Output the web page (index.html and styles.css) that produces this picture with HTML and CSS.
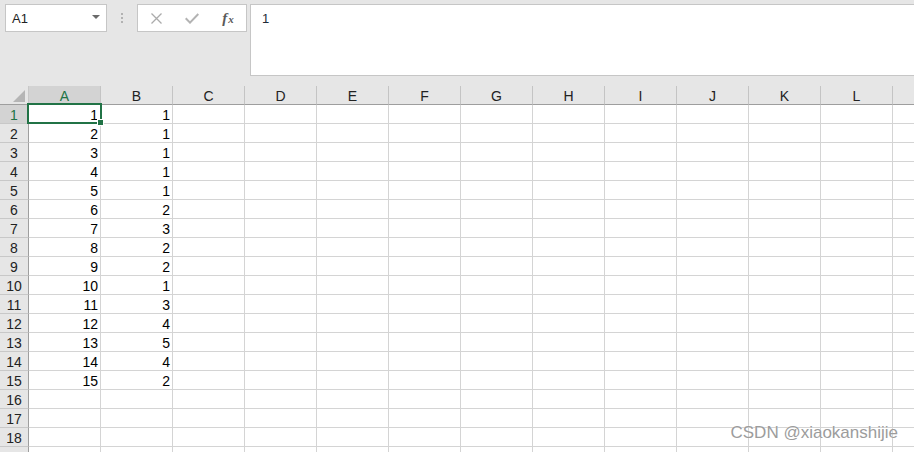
FILE: index.html
```html
<!DOCTYPE html>
<html>
<head>
<meta charset="utf-8">
<link rel="stylesheet" href="styles.css">
</head>
<body>
<div class="top">
  <div class="namebox"><span>A1</span><svg class="dd" width="8" height="4" viewBox="0 0 8 4"><path d="M0 0H8L4 4Z" fill="#6a6a6a"/></svg></div>
  <div class="sep"><i></i><i></i><i></i></div>
  <div class="fbox">
    <span class="slot"><svg width="11" height="11" viewBox="0 0 11 11"><path d="M0.5 0.5L10.5 10.5M10.5 0.5L0.5 10.5" stroke="#ababab" stroke-width="1.3" fill="none"/></svg></span>
    <span class="slot"><svg width="14" height="11" viewBox="0 0 14 11"><path d="M0.7 5.2L5 9.6L13.3 1" stroke="#b3b3b3" stroke-width="2" fill="none"/></svg></span>
    <span class="slot"><span class="fx"><span class="f">f</span><span class="x">x</span></span></span>
  </div>
  <div class="finput">1</div>
</div>
<div class="sheet">
  <div class="hrow">
    <div class="corner"><svg width="12" height="12" viewBox="0 0 12 12"><path d="M12 0V12H0Z" fill="#b5b5b5"/></svg></div>
    <div class="ch sel">A</div><div class="ch">B</div><div class="ch">C</div><div class="ch">D</div><div class="ch">E</div><div class="ch">F</div><div class="ch">G</div><div class="ch">H</div><div class="ch">I</div><div class="ch">J</div><div class="ch">K</div><div class="ch">L</div><div class="ch last"></div>
  </div>
  <div class="row"><div class="rh sel">1</div><div class="cells"><div class="c active">1<div class="selbox"><div class="handle"></div></div></div><div class="c">1</div></div></div>
  <div class="row"><div class="rh">2</div><div class="cells"><div class="c">2</div><div class="c">1</div></div></div>
  <div class="row"><div class="rh">3</div><div class="cells"><div class="c">3</div><div class="c">1</div></div></div>
  <div class="row"><div class="rh">4</div><div class="cells"><div class="c">4</div><div class="c">1</div></div></div>
  <div class="row"><div class="rh">5</div><div class="cells"><div class="c">5</div><div class="c">1</div></div></div>
  <div class="row"><div class="rh">6</div><div class="cells"><div class="c">6</div><div class="c">2</div></div></div>
  <div class="row"><div class="rh">7</div><div class="cells"><div class="c">7</div><div class="c">3</div></div></div>
  <div class="row"><div class="rh">8</div><div class="cells"><div class="c">8</div><div class="c">2</div></div></div>
  <div class="row"><div class="rh">9</div><div class="cells"><div class="c">9</div><div class="c">2</div></div></div>
  <div class="row"><div class="rh">10</div><div class="cells"><div class="c">10</div><div class="c">1</div></div></div>
  <div class="row"><div class="rh">11</div><div class="cells"><div class="c">11</div><div class="c">3</div></div></div>
  <div class="row"><div class="rh">12</div><div class="cells"><div class="c">12</div><div class="c">4</div></div></div>
  <div class="row"><div class="rh">13</div><div class="cells"><div class="c">13</div><div class="c">5</div></div></div>
  <div class="row"><div class="rh">14</div><div class="cells"><div class="c">14</div><div class="c">4</div></div></div>
  <div class="row"><div class="rh">15</div><div class="cells"><div class="c">15</div><div class="c">2</div></div></div>
  <div class="row"><div class="rh">16</div><div class="cells"></div></div>
  <div class="row"><div class="rh">17</div><div class="cells"></div></div>
  <div class="row"><div class="rh">18</div><div class="cells"></div></div>
  <div class="row"><div class="rh"></div><div class="cells"></div></div>
</div>
<div class="watermark">CSDN @xiaokanshijie</div>
</body>
</html>
```
FILE: styles.css
```css
html, body {
  margin: 0;
  padding: 0;
}
body {
  width: 914px;
  height: 452px;
  overflow: hidden;
  background: #ffffff;
  font-family: "Liberation Sans", Arial, sans-serif;
  color: #000;
  position: relative;
}
.top {
  height: 86px;
  box-sizing: border-box;
  background: #e6e6e6;
  display: flex;
  align-items: flex-start;
  padding: 4px 0 0 5px;
  overflow: hidden;
}
.namebox {
  width: 102px;
  height: 28px;
  box-sizing: border-box;
  border: 1px solid #c6c6c6;
  background: #fff;
  display: flex;
  align-items: center;
  justify-content: space-between;
  padding: 0 6px 0 6px;
  font-size: 13px;
  color: #222;
  flex: none;
}
.namebox .dd {
  margin-top: -2px;
}
.sep {
  margin-left: 14px;
  width: 2px;
  padding-top: 9px;
  display: flex;
  flex-direction: column;
  gap: 2px;
  flex: none;
}
.sep i {
  display: block;
  width: 2px;
  height: 2px;
  background: #b2b2b2;
}
.fbox {
  margin-left: 14px;
  width: 110px;
  height: 28px;
  box-sizing: border-box;
  border: 1px solid #c6c6c6;
  background: #fff;
  display: flex;
  align-items: center;
  flex: none;
}
.slot {
  width: 36px;
  height: 26px;
  display: flex;
  align-items: center;
  justify-content: center;
}
.fx {
  font-family: "Liberation Serif", "Times New Roman", serif;
  font-style: italic;
  font-weight: bold;
  color: #5a5a5a;
  line-height: 14px;
  white-space: nowrap;
}
.fx .f {
  font-size: 15px;
}
.fx .x {
  font-size: 11px;
  margin-left: 1px;
}
.finput {
  margin-left: 3px;
  flex: 1;
  height: 72px;
  box-sizing: border-box;
  border: 1px solid #c6c6c6;
  border-right: none;
  background: #fff;
  padding: 6px 0 0 11px;
  font-size: 13px;
  line-height: 16px;
  color: #1e2a38;
}
.sheet {
  display: flex;
  flex-direction: column;
}
.hrow {
  display: flex;
  height: 19px;
}
.corner {
  width: 29px;
  flex: none;
  box-sizing: border-box;
  background: #e6e6e6;
  border-right: 1px solid #c8c8c8;
  border-bottom: 1px solid #9e9e9e;
  display: flex;
  align-items: flex-end;
  justify-content: flex-end;
  padding: 0 3px 2px 0;
}
.ch {
  width: 72px;
  flex: none;
  box-sizing: border-box;
  background: #e6e6e6;
  border-right: 1px solid #c4c4c4;
  border-bottom: 1px solid #9e9e9e;
  text-align: center;
  font-size: 14px;
  line-height: 20px;
  color: #222;
}
.ch.last {
  flex: 1;
  border-right: none;
}
.ch.sel {
  background: #d3d3d3;
  color: #217346;
}
.row {
  display: flex;
  height: 19px;
}
.rh {
  width: 29px;
  flex: none;
  box-sizing: border-box;
  background: #e6e6e6;
  border-right: 1px solid #9e9e9e;
  border-bottom: 1px solid #c8c8c8;
  text-align: center;
  font-size: 14px;
  line-height: 20px;
  color: #222;
}
.rh.sel {
  background: #d3d3d3;
  color: #217346;
}
.cells {
  flex: 1;
  display: flex;
  box-sizing: border-box;
  border-bottom: 1px solid #d4d4d4;
  background-image: repeating-linear-gradient(to right, transparent 0 71px, #d4d4d4 71px 72px);
}
.c {
  width: 72px;
  flex: none;
  box-sizing: border-box;
  text-align: right;
  padding-right: 3px;
  font-size: 14px;
  line-height: 20px;
  color: #000;
}
.c.active {
  position: relative;
}
.selbox {
  position: absolute;
  left: -2px;
  top: -2px;
  right: -1px;
  bottom: -1px;
  border: 2px solid #217346;
}
.handle {
  position: absolute;
  right: -4px;
  bottom: -4px;
  width: 5px;
  height: 5px;
  background: #217346;
  border: 1px solid #fff;
}
.watermark {
  position: absolute;
  right: 16px;
  top: 423px;
  font-family: "Liberation Sans", Arial, sans-serif;
  font-size: 17px;
  line-height: 20px;
  color: #9c9c9c;
  text-shadow: 0 0 1px #fff;
}
```
